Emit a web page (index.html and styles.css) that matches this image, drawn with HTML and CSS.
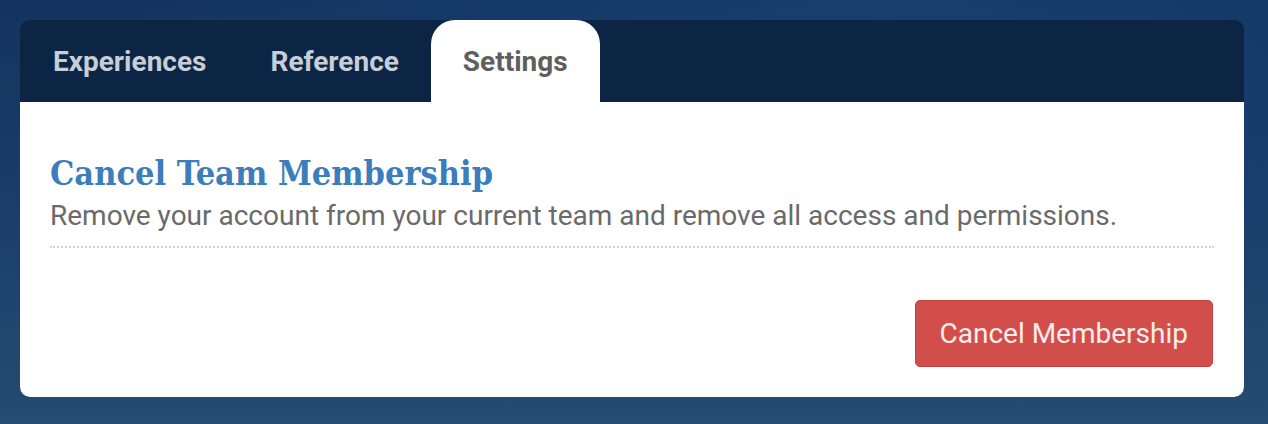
FILE: index.html
```html
<!DOCTYPE html>
<html>
<head>
<meta charset="utf-8">
<link rel="stylesheet" href="styles.css">
</head>
<body>
<div class="card">
  <nav class="tabs">
    <div class="tab">Experiences</div>
    <div class="tab">Reference</div>
    <div class="tab active">Settings</div>
  </nav>
  <section class="panel">
    <h2 class="title">Cancel Team Membership</h2>
    <p class="desc">Remove your account from your current team and remove all access and permissions.</p>
    <div class="actions">
      <button class="btn-danger">Cancel Membership</button>
    </div>
  </section>
</div>
</body>
</html>
```

FILE: styles.css
```css
html, body {
  margin: 0;
  height: 100%;
}
body {
  background:
    radial-gradient(ellipse at 70% 10%, rgba(24, 64, 112, 0.9) 0%, rgba(24, 64, 112, 0) 60%),
    linear-gradient(180deg, #133460 0%, #1a3e69 50%, #264c73 100%);
  padding: 20px 24px 0 20px;
  box-sizing: border-box;
  font-family: Roboto, "Liberation Sans", sans-serif;
}
.card {
  border-radius: 10px;
  overflow: hidden;
  background: #0c2545;
}
.tabs {
  display: flex;
  height: 82px;
  background: #0c2545;
}
.tab {
  display: flex;
  align-items: center;
  padding: 0 32px;
  font-size: 28px;
  font-weight: 700;
  color: #c6ced8;
}
.tab:first-child {
  margin-left: 1px;
}
.tab.active {
  background: #fff;
  color: #5f5f5f;
  border-radius: 24px 24px 0 0;
}
.panel {
  background: #fff;
  padding: 51px 30px 30px 30px;
}
.title {
  margin: 0;
  font-family: "DejaVu Serif Condensed", "DejaVu Serif", serif;
  font-stretch: condensed;
  font-weight: 700;
  font-size: 34px;
  line-height: 40px;
  color: #3c7dbb;
}
.desc {
  margin: 7px 0 0 0;
  font-size: 28px;
  line-height: 32px;
  color: #6a6a6a;
  padding-bottom: 14px;
  border-bottom: 2px dotted #cfcfcf;
}
.actions {
  display: flex;
  justify-content: flex-end;
  margin-top: 52px;
}
.btn-danger {
  font-family: Roboto, "Liberation Sans", sans-serif;
  font-size: 28px;
  color: #fbecec;
  background: #d14e4b;
  border: 1px solid #c6413f;
  border-radius: 5px;
  padding: 0 24px;
  height: 67px;
  margin-right: 1px;
}
```
